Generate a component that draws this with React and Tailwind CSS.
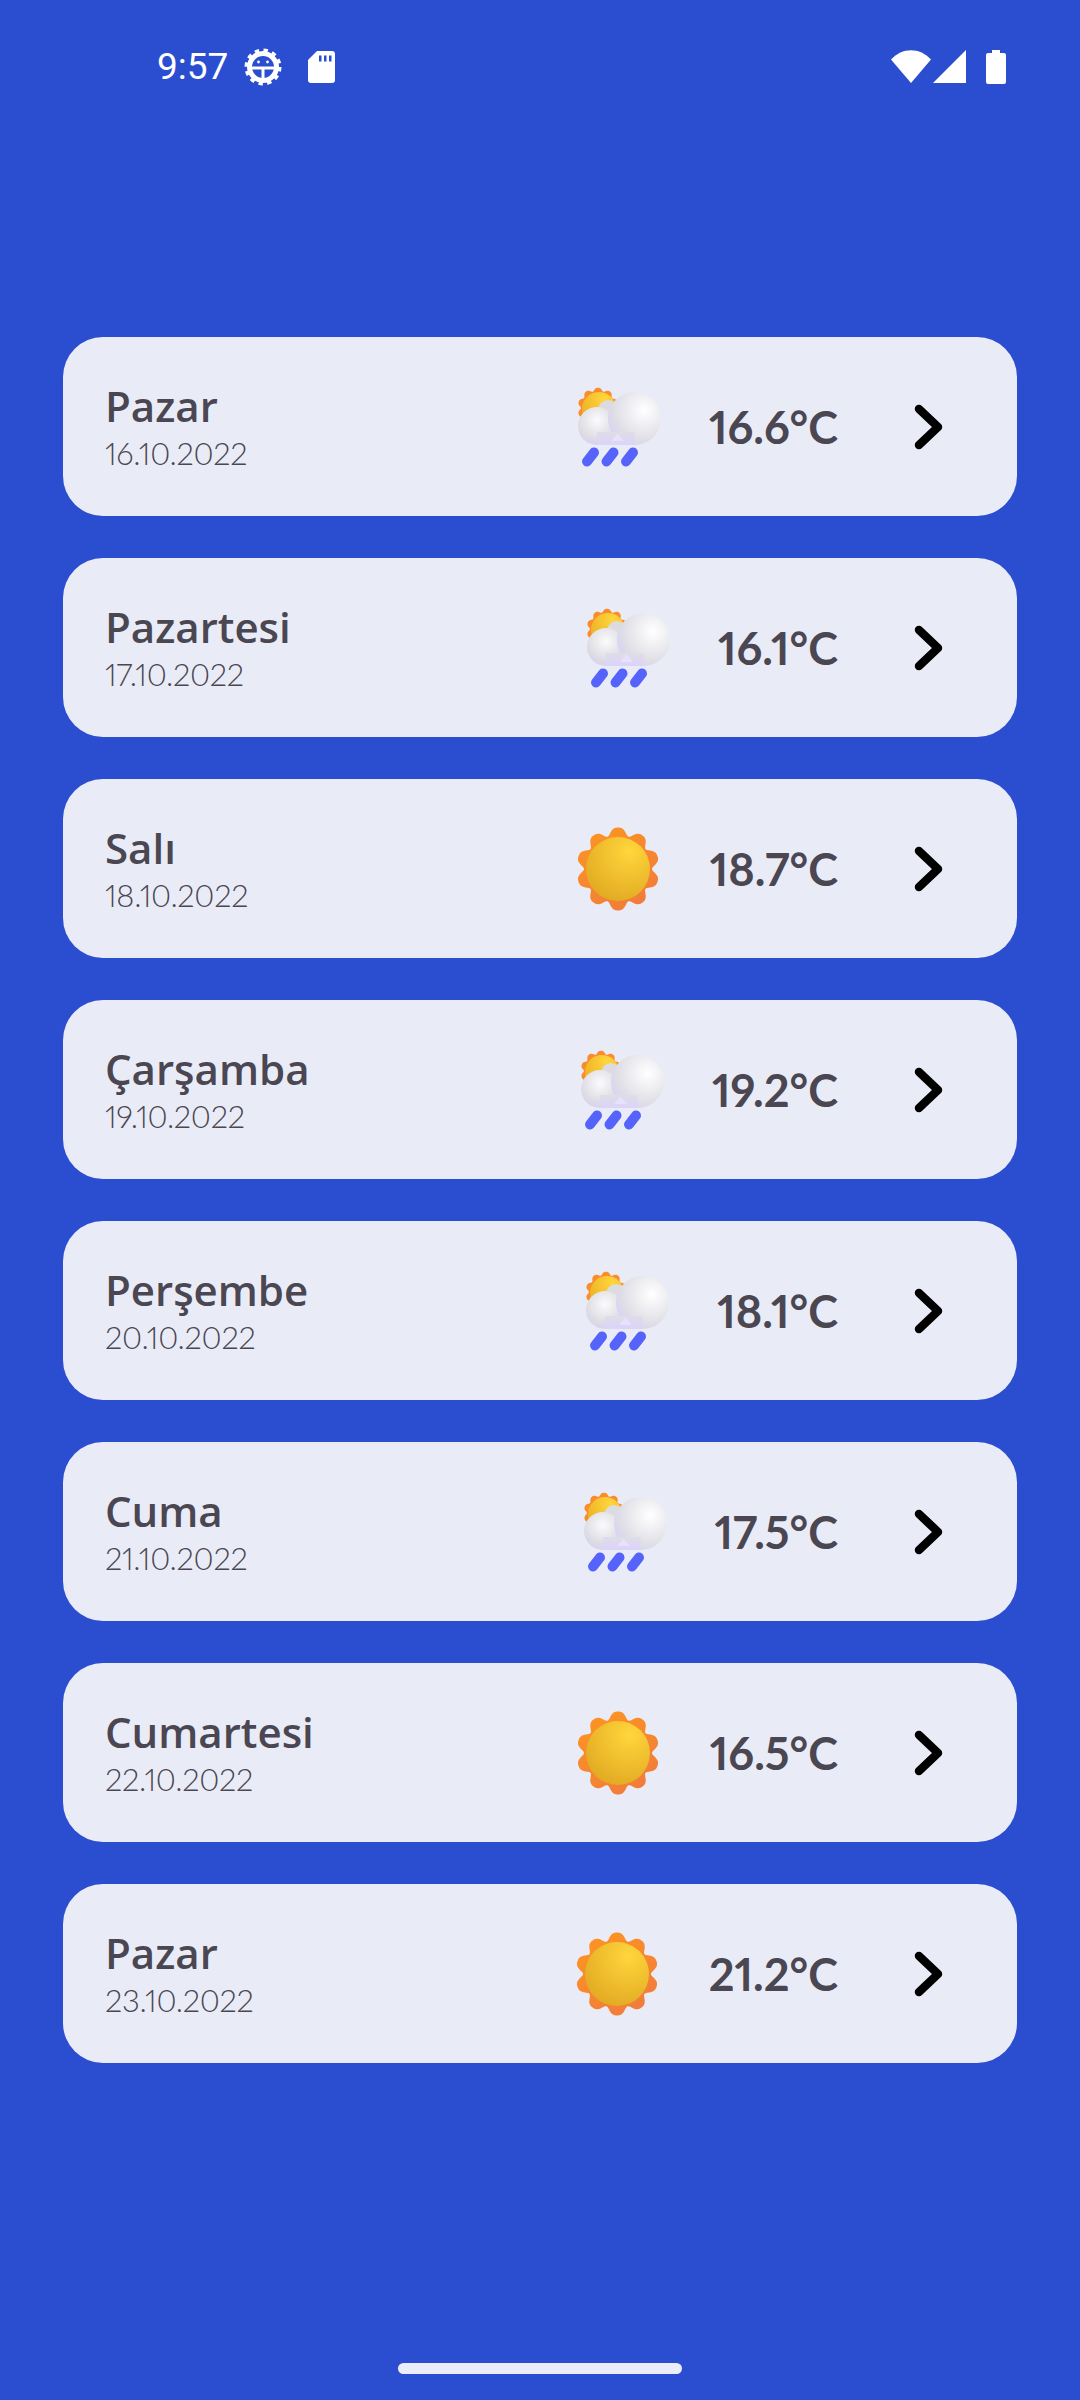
import React from "react";

const days = [
  { name: "Pazar", date: "16.10.2022", temp: "16.6°C", icon: "rain" },
  { name: "Pazartesi", date: "17.10.2022", temp: "16.1°C", icon: "rain" },
  { name: "Salı", date: "18.10.2022", temp: "18.7°C", icon: "sun" },
  { name: "Çarşamba", date: "19.10.2022", temp: "19.2°C", icon: "rain" },
  { name: "Perşembe", date: "20.10.2022", temp: "18.1°C", icon: "rain" },
  { name: "Cuma", date: "21.10.2022", temp: "17.5°C", icon: "rain" },
  { name: "Cumartesi", date: "22.10.2022", temp: "16.5°C", icon: "sun" },
  { name: "Pazar", date: "23.10.2022", temp: "21.2°C", icon: "sun" },
];

// scalloped sun edge, ten bumps
const sunEdge = (cx, cy, r, amp) => {
  const pts = [];
  for (let i = 0; i < 240; i++) {
    const a = (i / 240) * Math.PI * 2;
    const rad = r + amp * (Math.cos(a * 10) - 0.2 * Math.cos(a * 20));
    pts.push(`${(cx + rad * Math.sin(a)).toFixed(2)},${(cy - rad * Math.cos(a)).toFixed(2)}`);
  }
  return `M${pts.join("L")}Z`;
};

const SunIcon = () => (
  <svg width="84" height="84" viewBox="-2 0 84 84" className="mr-[3px] shrink-0">
    <defs>
      <linearGradient id="sunEdge" x1="0.2" y1="0" x2="0.8" y2="1">
        <stop offset="0" stopColor="#fd9423" />
        <stop offset="1" stopColor="#f07a3c" />
      </linearGradient>
      <radialGradient id="sunFace" cx="0.68" cy="0.22" r="0.95">
        <stop offset="0" stopColor="#ffd63c" />
        <stop offset="1" stopColor="#dea41f" />
      </radialGradient>
    </defs>
    <path d={sunEdge(40, 42, 38.5, 3.8)} fill="url(#sunEdge)" />
    <circle cx="40" cy="42" r="32" fill="url(#sunFace)" />
  </svg>
);

const RainIcon = () => (
  <svg width="84" height="84" viewBox="18 13 84 84" className="shrink-0">
    <defs>
      <radialGradient id="rainSun" cx="0.65" cy="0.2" r="0.9">
        <stop offset="0" stopColor="#ffd63c" />
        <stop offset="1" stopColor="#e9ab22" />
      </radialGradient>
      <radialGradient id="puffL" cx="0.5" cy="0.35" r="0.65">
        <stop offset="0" stopColor="#fbfbfc" />
        <stop offset="0.75" stopColor="#dddce3" />
        <stop offset="1" stopColor="#d8d2f2" />
      </radialGradient>
      <radialGradient id="puffR" cx="0.68" cy="0.35" r="0.75">
        <stop offset="0" stopColor="#ffffff" />
        <stop offset="0.75" stopColor="#dfdee5" />
        <stop offset="1" stopColor="#d8d2f5" />
      </radialGradient>
      <linearGradient id="cloudBase" x1="0" y1="0" x2="0" y2="1">
        <stop offset="0" stopColor="#dfdde6" />
        <stop offset="1" stopColor="#dbd3fb" />
      </linearGradient>
    </defs>
    <path d={sunEdge(38, 36, 19, 1.6)} fill="#fb8c2c" />
    <circle cx="39" cy="37" r="17" fill="url(#rainSun)" />
    <circle cx="48" cy="38" r="10" fill="#dcdbdf" />
    <circle cx="37" cy="54" r="19" fill="url(#puffL)" />
    <circle cx="74.5" cy="46.5" r="26.5" fill="url(#puffR)" />
    <rect x="37" y="60" width="37.5" height="13" fill="url(#cloudBase)" />
    <path d="M51 69L57.5 61.5L64 69Z" fill="#e9e0fc" />
    <g stroke="#5563fb" strokeWidth="10" strokeLinecap="round">
      <line x1="27" y1="89.5" x2="34" y2="80.5" />
      <line x1="46.5" y1="89.5" x2="53.5" y2="80.5" />
      <line x1="66" y1="89.5" x2="73" y2="80.5" />
    </g>
  </svg>
);

const DayRow = ({ day }) => (
  <div className="flex h-[179px] items-center rounded-[40px] bg-[#e9ecf6] pl-[42px] pr-[71px] text-[#4a4652]">
    <div className="flex flex-1 flex-col mt-[4px]">
      <span className="text-[42px] leading-[48px] font-semibold font-['Open_Sans',sans-serif]">{day.name}</span>
      <span className="text-[31px] leading-[46px] font-light tracking-[-0.3px] proportional-nums font-['Lato',sans-serif]">{day.date}</span>
    </div>
    {day.icon === "sun" ? <SunIcon /> : <RainIcon />}
    <span className="ml-[47px] mt-[2px] text-[45px] font-bold leading-none proportional-nums font-['Lato',sans-serif]">{day.temp}</span>
    <svg width="34" height="48" viewBox="0 0 34 48" className="ml-[74px] shrink-0">
      <path d="M7 6L26 24L7 42" fill="none" stroke="#000" strokeWidth="8.5" strokeLinecap="round" strokeLinejoin="round" />
    </svg>
  </div>
);

const StatusBar = () => (
  <div className="flex h-[135px] items-center pl-[157px] pr-[74px] pb-[2px] text-white">
    <span className="text-[37px] leading-none font-['Roboto',sans-serif]">9:57</span>
    <svg width="38" height="38" viewBox="0 0 38 38" className="ml-[16px]">
      <circle cx="19" cy="19" r="13.5" fill="none" stroke="#fff" strokeWidth="5" />
      <circle cx="19" cy="19" r="16.5" fill="none" stroke="#fff" strokeWidth="4" strokeDasharray="4.3 4.34" />
      <path d="M8 18.5H30V21.5H8Z" fill="#fff" />
      <path d="M19 20V31" stroke="#fff" strokeWidth="3" />
      <circle cx="14.5" cy="14" r="1.4" fill="#fff" />
      <circle cx="23.5" cy="14" r="1.4" fill="#fff" />
    </svg>
    <svg width="27" height="32" viewBox="0 0 27 32" className="ml-[26px]">
      <path d="M9 0H24A3 3 0 0 1 27 3V29A3 3 0 0 1 24 32H3A3 3 0 0 1 0 29V9Z" fill="#fff" />
      <path d="M11 4.5h2.5v6H11ZM16 4.5h2.5v6H16ZM21 4.5h2.5v6H21Z" fill="#2b4dcf" />
    </svg>
    <div className="ml-auto flex items-center">
      <svg width="40" height="33" viewBox="0 0 40 33">
        <path d="M0 9.5C11 -3 29 -3 40 9.5L20 33Z" fill="#fff" />
      </svg>
      <svg width="34" height="33" viewBox="0 0 34 33" className="ml-[2px]">
        <path d="M33 0V33H0Z" fill="#fff" />
      </svg>
      <svg width="20" height="34" viewBox="0 0 20 34" className="ml-[19px]">
        <path d="M6 0H14V3H18A2 2 0 0 1 20 5V32A2 2 0 0 1 18 34H2A2 2 0 0 1 0 32V5A2 2 0 0 1 2 3H6Z" fill="#fff" />
      </svg>
    </div>
  </div>
);

export default function App() {
  return (
    <div className="flex h-[2400px] w-[1080px] flex-col bg-[#2b4dcf]">
      <StatusBar />
      <div className="mt-[202px] flex flex-col gap-[42px] pl-[63px] pr-[63px]">
        {days.map((day, i) => (
          <DayRow key={i} day={day} />
        ))}
      </div>
      <div className="mx-auto mt-auto mb-[26px] h-[11px] w-[284px] rounded-full bg-[#ebeefa]" />
    </div>
  );
}
